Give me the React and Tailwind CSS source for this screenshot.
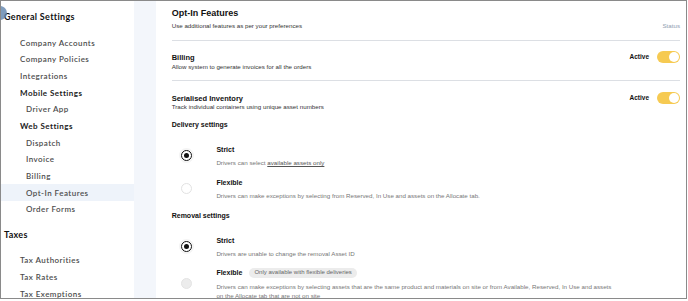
import React from 'react'

const navItems = [
    { label: 'Company Accounts', indent: 'pl-[19px]' },
    { label: 'Company Policies', indent: 'pl-[19px]' },
    { label: 'Integrations', indent: 'pl-[19px]' },
    { label: 'Mobile Settings', indent: 'pl-[19px]', bold: true },
    { label: 'Driver App', indent: 'pl-[25px]' },
    { label: 'Web Settings', indent: 'pl-[19px]', bold: true },
    { label: 'Dispatch', indent: 'pl-[25px]' },
    { label: 'Invoice', indent: 'pl-[25px]' },
    { label: 'Billing', indent: 'pl-[25px]' },
    { label: 'Opt-In Features', indent: 'pl-[25px]', active: true },
    { label: 'Order Forms', indent: 'pl-[25px]' },
]

const taxItems = ['Tax Authorities', 'Tax Rates', 'Tax Exemptions']

const NavRow = ({ item }) => (
    <div
        className={`h-[16.65px] flex items-center ${item.indent} ${item.active ? 'bg-[#eef3fa]' : ''} ${item.bold ? 'font-bold text-[#1c1c1c]' : 'font-semibold text-[#4d4d4d]'} text-[8px] tracking-[0.45px]`}
    >
        {item.label}
    </div>
)

const Toggle = () => (
    <div className="flex items-center gap-[8px]">
        <span className="text-[6.5px] font-bold text-[#111]">Active</span>
        <div className="w-[23px] h-[12px] rounded-full bg-[#f6ca52] flex items-center justify-end pr-[1px]">
            <div className="w-[10px] h-[10px] rounded-full bg-white" />
        </div>
    </div>
)

const Radio = ({ state }) => {
    if (state === 'on') {
        return (
            <div className="w-[11px] h-[11px] rounded-full border-[1.5px] border-[#111] flex items-center justify-center bg-white shadow-[0_0_0_2px_#f4f4f4]">
                <div className="w-[5px] h-[5px] rounded-full bg-[#111]" />
            </div>
        )
    }
    if (state === 'disabled') {
        return <div className="w-[11px] h-[11px] rounded-full bg-[#ececec] border border-[#e4e4e4]" />
    }
    return <div className="w-[11px] h-[11px] rounded-full bg-white border border-[#e2e2e2]" />
}

const Option = ({ state, title, badge, children, className }) => (
    <div className={`flex items-center ${className}`}>
        <div className="w-[44.7px] pl-[9.2px] flex">
            <Radio state={state} />
        </div>
        <div>
            <div className="flex items-center gap-[7px]">
                <span className="text-[7px] leading-[9px] font-bold text-[#111]">{title}</span>
                {badge && (
                    <span className="rounded-full bg-[#ececec] px-[5px] h-[9.5px] flex items-center text-[6px] text-[#666]">
                        {badge}
                    </span>
                )}
            </div>
            <div className="mt-[4px] max-w-[400px] text-[6.2px] leading-[9px] text-[#777]">{children}</div>
        </div>
    </div>
)

export default function App() {
    return (
        <div className="w-[688px] h-[301px] bg-white relative overflow-hidden">
            <div className="w-[687px] h-[299px] border border-[#8a8a8a] flex overflow-hidden relative font-['Liberation_Sans',Arial,sans-serif]">
                {/* cursor dot */}
                <div className="absolute left-[-8px] top-[5px] w-[14px] h-[14px] rounded-full bg-[#5f83ad] opacity-80" />

                {/* sidebar */}
                <div className="w-[133px] shrink-0 pt-[7px] font-['Lato',sans-serif]">
                    <div className="h-[17px] flex items-center pl-[3px] text-[9px] font-bold tracking-[0.3px] text-[#111]">
                        General Settings
                    </div>
                    <div className="mt-[9.5px]">
                        {navItems.map((item) => (
                            <NavRow key={item.label} item={item} />
                        ))}
                    </div>
                    <div className="mt-[8.5px] h-[16.65px] flex items-center pl-[3px] text-[9px] font-bold tracking-[0.3px] text-[#111]">
                        Taxes
                    </div>
                    <div className="mt-[9.4px]">
                        {taxItems.map((t) => (
                            <NavRow key={t} item={{ label: t, indent: 'pl-[19px]' }} />
                        ))}
                    </div>
                </div>

                {/* strip */}
                <div className="w-[22px] shrink-0 bg-[#f3f6fb]" />

                {/* main */}
                <div className="flex-1 pl-[15.7px] pr-[6px]">
                    <div className="mt-[6.5px] text-[9px] leading-[11px] font-bold text-[#111]">Opt-In Features</div>
                    <div className="mt-[3px] flex justify-between text-[6.2px] leading-[8px]">
                        <span className="text-[#333]">Use additional features as per your preferences</span>
                        <span className="text-[#8f9cb0]">Status</span>
                    </div>
                    <div className="mt-[10.5px] h-px bg-[#dcdfe4]" />

                    <div className="mt-[11.5px] flex justify-between items-start">
                        <div>
                            <div className="text-[7.5px] leading-[9px] font-bold text-[#111]">Billing</div>
                            <div className="mt-[1px] text-[6.2px] leading-[8px] text-[#333]">
                                Allow system to generate invoices for all the orders
                            </div>
                        </div>
                        <div className="h-[9px] flex items-center">
                            <Toggle />
                        </div>
                    </div>
                    <div className="mt-[9.5px] h-px bg-[#dcdfe4]" />

                    <div className="mt-[12.5px] flex justify-between items-start">
                        <div>
                            <div className="text-[7.5px] leading-[9px] font-bold text-[#111]">Serialised Inventory</div>
                            <div className="mt-[0.5px] text-[6.2px] leading-[8px] text-[#333]">
                                Track individual containers using unique asset numbers
                            </div>
                        </div>
                        <div className="h-[9px] flex items-center">
                            <Toggle />
                        </div>
                    </div>

                    <div className="mt-[8.5px] text-[7px] leading-[9px] font-bold text-[#111]">Delivery settings</div>
                    <Option state="on" title="Strict" className="mt-[16.3px]">
                        Drivers can select{' '}
                        <span className="underline text-[#555]">available assets only</span>
                    </Option>
                    <Option state="off" title="Flexible" className="mt-[10.8px]">
                        Drivers can make exceptions by selecting from Reserved, In Use and assets on the Allocate tab.
                    </Option>

                    <div className="mt-[11.5px] text-[7px] leading-[9px] font-bold text-[#111]">Removal settings</div>
                    <Option state="on" title="Strict" className="mt-[15.5px]">
                        Drivers are unable to change the removal Asset ID
                    </Option>
                    <Option
                        state="disabled"
                        title="Flexible"
                        badge="Only available with flexible deliveries"
                        className="mt-[10.5px]"
                    >
                        Drivers can make exceptions by selecting assets that are the same product and materials on site or from
                        Available, Reserved, In Use and assets on the Allocate tab that are not on site
                    </Option>
                </div>
            </div>
        </div>
    )
}
